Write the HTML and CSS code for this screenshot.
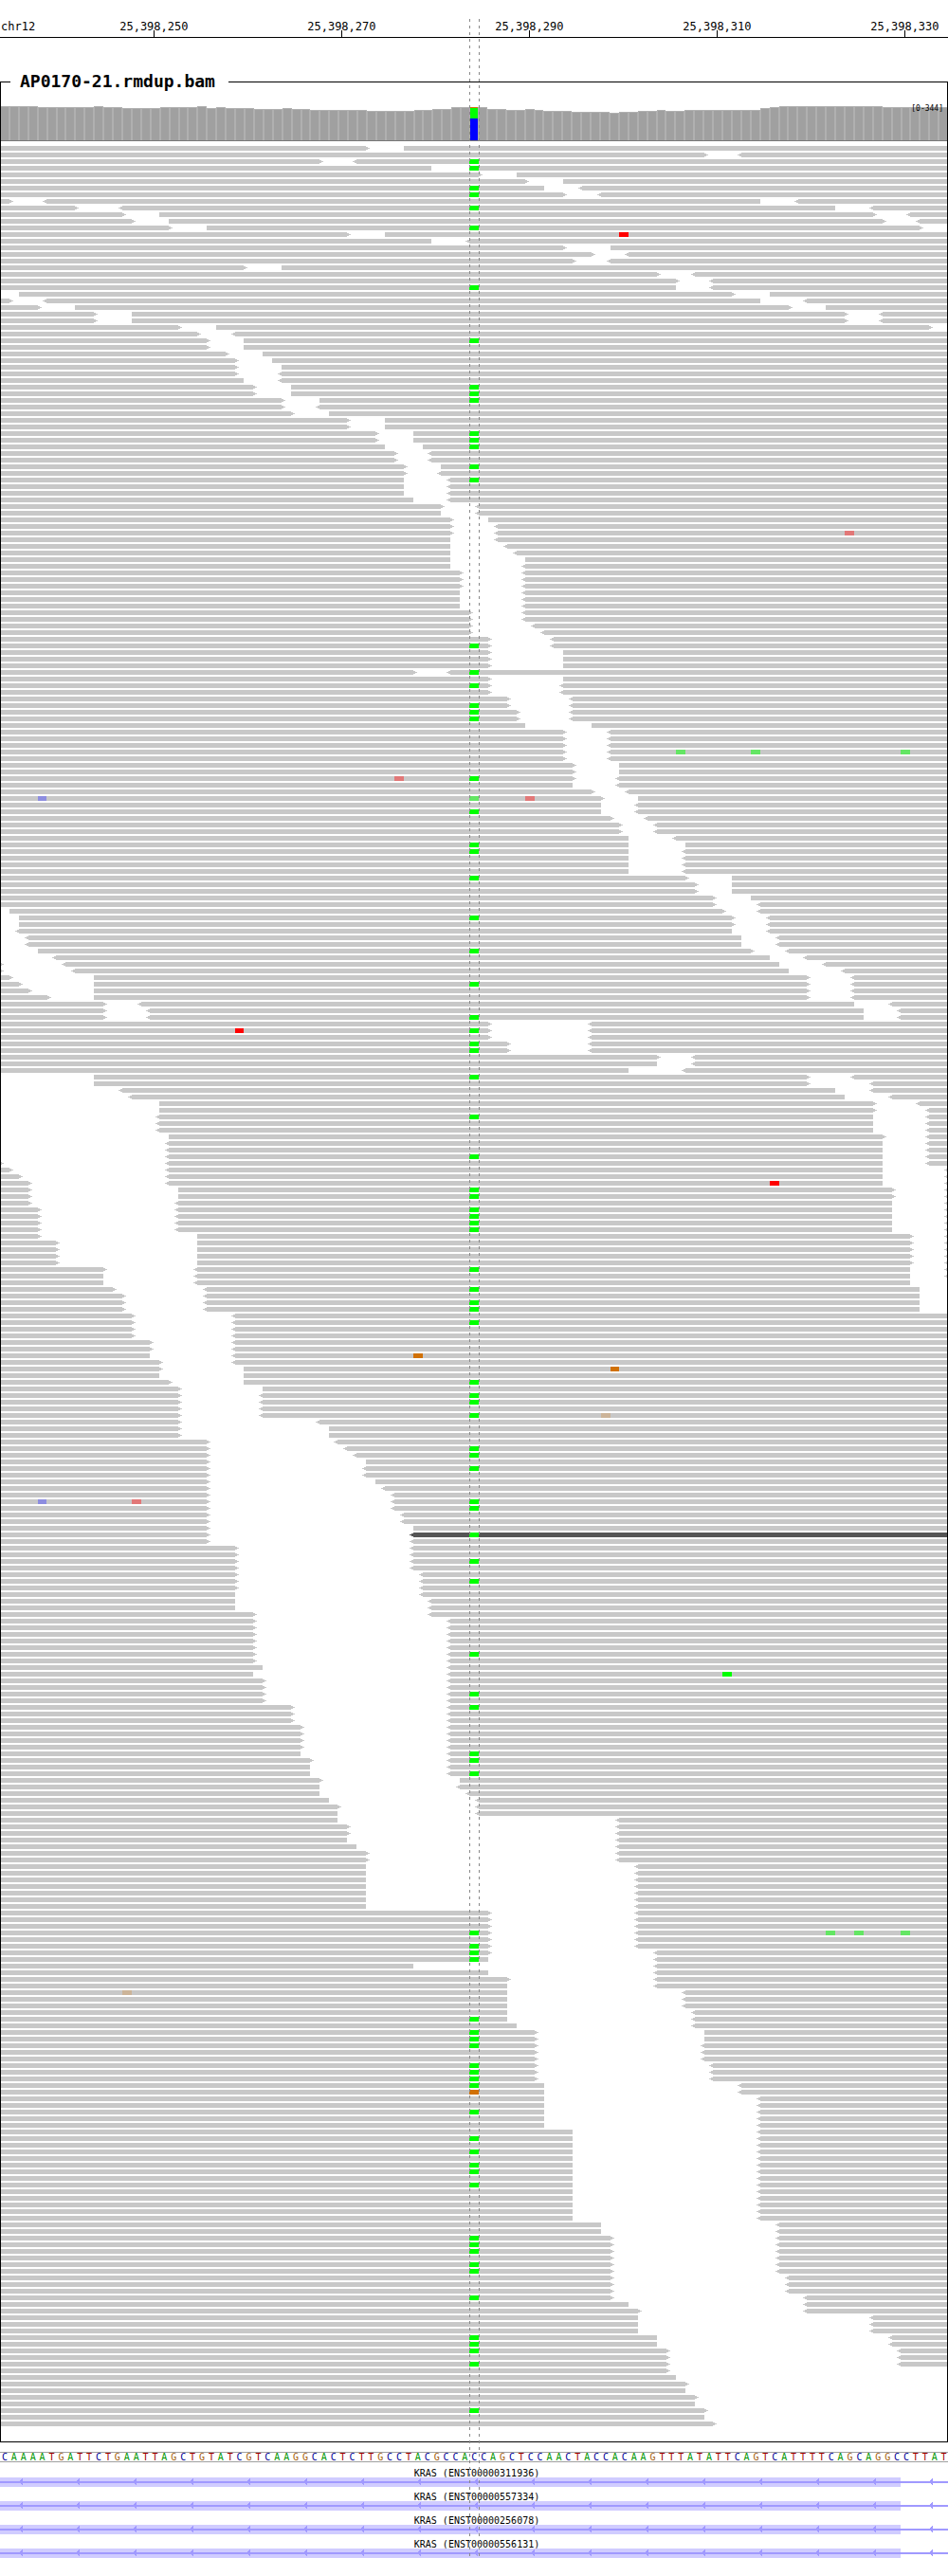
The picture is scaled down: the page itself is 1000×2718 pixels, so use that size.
FILE: index.html
```html
<!DOCTYPE html>
<html lang="en">
<head>
<meta charset="utf-8">
<meta name="viewport" content="width=device-width, initial-scale=1">
<title>AP0170-21.rmdup.bam – chr12:25,398,234-25,398,334</title>
<link rel="stylesheet" href="styles.css">
</head>
<body>
<main class="browser">
  <header class="axis">
    <span class="axis-chrom">chr12</span>
    <div class="axis-labels">
      <span class="axis-label">25,398,250</span>
      <span class="axis-label">25,398,270</span>
      <span class="axis-label">25,398,290</span>
      <span class="axis-label">25,398,310</span>
      <span class="axis-label">25,398,330</span>
    </div>
  </header>

  <section class="panel" aria-labelledby="sample">
    <div class="panel-head">
      <h1 class="panel-title" id="sample">AP0170-21.rmdup.bam</h1>
    </div>
    <div class="panel-body">
      <div class="coverage" id="coverage"></div>
      <span class="coverage-range">[0-344]</span>
      <div class="reads" id="reads"></div>
    </div>
  </section>

  <div class="sequence" id="sequence"></div>

  <section class="genes">
    <div class="gene"><h2 class="gene-name">KRAS (ENST00000311936)</h2><div class="gene-model"><div class="gene-exon"></div></div></div>
    <div class="gene"><h2 class="gene-name">KRAS (ENST00000557334)</h2><div class="gene-model"><div class="gene-exon"></div></div></div>
    <div class="gene"><h2 class="gene-name">KRAS (ENST00000256078)</h2><div class="gene-model"><div class="gene-exon"></div></div></div>
    <div class="gene"><h2 class="gene-name">KRAS (ENST00000556131)</h2><div class="gene-model"><div class="gene-exon"></div></div></div>
  </section>

  <div class="guides"></div>
</main>
<script src="tracks.js"></script>
</body>
</html>
```
FILE: styles.css
```css
:root {
  --read: #c8c8c8;
  --gene: #a099ff;
  --exon: #d0ccff;
  --base: calc(100% / 101);
}

* {
  box-sizing: border-box;
}

body {
  margin: 0;
  background: #fff;
  color: #000;
  font-family: "DejaVu Sans Mono", "Liberation Mono", monospace;
}

.browser {
  position: relative;
  padding-bottom: 19px;
}

h1,
h2 {
  margin: 0;
}

/* Coordinate axis */
.axis {
  position: relative;
  padding-top: 21px;
  border-bottom: 1px solid #000;
  font-size: 12px;
  line-height: 14px;
}

.axis-chrom {
  position: absolute;
  left: 1px;
}

.axis-labels {
  display: flex;
  height: 18px;
  padding-left: calc(var(--base) * 6.5);
  margin-right: calc(var(--base) * -5.5);
}

.axis {
  overflow: hidden;
}

.axis-label {
  flex: 1;
  text-align: center;
  padding-right: 2px;
  background: linear-gradient(#000, #000) no-repeat calc(50% - 1px) 100% / 1px 7px;
}

/* Alignment panel */
.panel {
  margin-top: 35px;
}

.panel-head {
  display: flex;
  height: 24px;
}

.panel-head::before,
.panel-head::after {
  content: "";
  height: 12px;
  align-self: flex-end;
  border-top: 1px solid #000;
}

.panel-head::before {
  width: 10px;
  border-left: 1px solid #000;
}

.panel-head::after {
  flex: 1;
  border-right: 1px solid #000;
}

.panel-title {
  padding: 0 14px 0 10px;
  font-size: 18px;
  line-height: 21px;
}

.panel-body {
  position: relative;
  padding-bottom: 17px;
}

.panel-body::after {
  content: "";
  position: absolute;
  inset: 0;
  border: solid #000;
  border-width: 0 1px 1px;
  pointer-events: none;
}

.coverage {
  display: flex;
  align-items: flex-end;
  height: 50px;
  border-bottom: 1px solid #777;
}

.bar {
  flex: 1;
  border: 1px solid #b0b0b0;
  border-bottom: 0;
  background: #a0a0a0;
}

.bar-split {
  flex: 1;
  display: flex;
  flex-direction: column;
}

.coverage-range {
  position: absolute;
  top: 11px;
  right: 5px;
  font-size: 8px;
  line-height: 10px;
}

.reads {
  display: grid;
  gap: 2px;
  padding-top: 5px;
}

.row {
  position: relative;
  display: flex;
  height: 5px;
}

.read {
  --fill: var(--read);
  position: relative;
  flex: none;
  background: var(--fill);
}

.read-odd {
  --fill: #555;
}

.fwd::after,
.rev::before {
  content: "";
  position: absolute;
  top: 0;
  width: 4px;
  height: 5px;
  background-image: linear-gradient(var(--fill), var(--fill)), linear-gradient(var(--fill), var(--fill));
  background-size: 2px 3px, 4px 1px;
  background-repeat: no-repeat;
}

.fwd::after {
  left: 100%;
  background-position: 0 50%;
}

.rev::before {
  right: 100%;
  background-position: 100% 50%;
}

.snv {
  position: absolute;
  top: 0;
  width: var(--base);
  height: 5px;
}

.fill-A { background: #00ff00; }
.fill-C { background: #0000ff; }
.fill-G { background: #d17105; }
.fill-T { background: #ff0000; }
.fill-a { background: #64e664; }
.fill-c { background: #8d8de0; }
.fill-g { background: #ccb499; }
.fill-t { background: #e27878; }

/* Reference sequence */
.sequence {
  display: flex;
  height: 11px;
  margin-top: 10px;
  border: solid #a0a0a0;
  border-width: 1px 0;
  font-size: 10px;
  line-height: 10px;
}

.nt {
  flex: 1;
  min-width: 0;
  text-align: center;
}

.nt-A { color: #009600; }
.nt-C { color: #000096; }
.nt-G { color: #a5600d; }
.nt-T { color: #a00000; }

/* Transcripts */
.genes {
  padding-top: 1px;
}

.gene {
  padding-top: 7px;
}

.gene-name {
  font-size: 10px;
  font-weight: normal;
  line-height: 8px;
  text-align: center;
  padding-left: 6px;
}

.gene-model {
  position: relative;
  height: 10px;
}

.gene-exon {
  width: 95%;
  height: 10px;
  background: var(--exon);
}

.gene-model::after {
  content: "";
  position: absolute;
  inset: 0;
  background-image:
    linear-gradient(var(--gene), var(--gene)),
    linear-gradient(to right, transparent 23px, var(--gene) 23px, var(--gene) 24px, transparent 24px),
    linear-gradient(to right, transparent 22px, var(--gene) 22px, var(--gene) 23px, transparent 23px),
    linear-gradient(to right, transparent 21px, var(--gene) 21px, var(--gene) 22px, transparent 22px);
  background-size: 100% 2px, 60px 7px, 60px 5px, 60px 3px;
  background-position: 0 4px, 0 1px, 0 2px, 0 3px;
  background-repeat: repeat-x;
}

/* Dashed guides on both sides of the centre base */
.guides {
  position: absolute;
  top: 20px;
  bottom: 20px;
  left: calc(var(--base) * 50);
  width: calc(var(--base) + 1px);
  background-image:
    repeating-linear-gradient(#888 0 3px, transparent 3px 7px),
    repeating-linear-gradient(#888 0 3px, transparent 3px 7px);
  background-size: 1px 100%;
  background-position: 0 0, 100% 0;
  background-repeat: no-repeat;
  pointer-events: none;
}
```
FILE: tracks.js
```js
const BASES = 101;

const SEQUENCE =
  "CAAAATGATTCTGAATTAGCTGTATCGTCAAGGCACTCTTGCCTACGCCAC" +
  "CAGCTCCAACTACCACAAGTTTATATTCAGTCATTTTCAGCAGGCCTTAT";

// [number of bases, bar height]; the centre base is split by allele
const DEPTH = [
  [4, 36], [6, 35], [1, 36], [2, 35], [4, 34], [4, 35], [1, 36], [1, 34], [1, 35],
  [3, 34], [3, 33], [1, 34], [2, 33], [6, 32], [5, 31], [2, 32], [2, 33], [2, 35],
  [1, { G: 1, A: 11, C: 23 }],
  [1, 35], [2, 33], [2, 32], [1, 33], [1, 32], [3, 31], [4, 30], [1, 29], [2, 30],
  [2, 31], [1, 32], [2, 31], [8, 32], [1, 34], [1, 35], [11, 36], [7, 35]
];

// One line per row. A row starts covered; each position toggles coverage.
// "39>" forward read ends, "<43" reverse read starts, a bare number is a plain
// edge, "#" marks a discordant read, "A50" is a mismatch (lower case: low
// quality), "*n" repeats the row.
const ROWS = `
39> 43
75> <79
34> <38 A50
46 50 A50
51> 55
56> 60
58 <62 A50
60> <64 A50
1> <5 81 <85
8> <13 89 <93 A50
13> 17 93> <97
14> 18 94> <98
18> 22 98> A50
37> 41 T66
46 <50
60> 65
63> <67
61> <65
26> 30
70> <74
72> <76
72 <76 A50
0 2 78> 82
1> <5 81 <86
4> 8 84> 88
10> 14 90> <94 *2
19> 23 99>
21> <25
22> 26 A50
22> 26
24> 28
25> 29
25> 30
25> <30
26 <30
27> 31 A50 *2
30> 34 A50
30> <34
31> 35
37> 41 *2
40> 44 A50 *2
41 45 A50
42> <46 *2
43> 47 A50
43> <47
43 <48 A50
43 <48 *2
44 <48
47> <51
47 <51
48> 52
48> <53
48> <53 t90
48 <53
48 <54
48 <55
48 56
48 <56
49> <56 *3
49 <56 *3
50> <56 *2
50> <57
50> <58
52> <59
52> <59 A50
52> 60 *3
44> <48 A50
52> 60
52> <60 A50
52> <60
54> <61
54> <61 A50
55> <61 A50 *2
56 63
60> <65 *3
60> <65 a72 a80 a96
60> <65
61> 66 *2
61> <66 t42 A50
61 <66
63> <67
64> 68 c4 a50 t56
64 <68
64 <68 A50
65> <69
66> <70 *2
67 <72
67 73 A50
67 <73 A50
67 <73 *3
73> 78 A50
74> 78 *2
76> 80
76> <81
0 1 77> <81
0 2 78> <82 A50
0 2 78> <82
0 <2 78 <82
0 <3 79 <83 *2
0 4 80> <84 A50
0 <6 82 <86
0> <7 83 <88
0> <8 84 <90
1> 10 86> <91
2> 10 86> <91 A50
3> 10 86> <91
5> 10 86> <91
11> <15 91 <95
11> <16 92 <96
11> <16 92 <96 A50
52> <63
52> <63 T25 A50
52> <63
54> <63 A50 *2
70> <74
70 <74
67 <73
0 10 86> <91 A50
0 10 86> <93
0 <13 89 <93
0 <14 90 <95
0 17 93> <98
0 17 93> <99
0 <17 93 <99 A50
0 <17 93 <99 *2
0 18 94> <99
0 <18 94 <99 *2
0 <18 94 <99 A50
0> <18 94 <99
1> <18 94 <101
2> <18 94 <101
3> <18 94 <101 T82
3> 19 95> <101 A50 *2
3> <19 95 <101
4> <19 95 <101 A50 *4
4> 21 97> <101
6> 21 97> <101 *4
11> <21 97 <101 A50
11 <21 97 <101
11 <21 97
12> <22 98 A50
13> <22 98
13> <22 98 A50 *2
14> <25
14> <25 A50
14> <25 *2
16> <25 *2
16 <25 G44
17> <25
17> 26 G65
17 26
18> 26 A50
19> 28
19> <28 A50 *2
19> <28
19> <28 A50 g64
19> <34
19> 35 *2
22> <36
22> <37 A50
22> <38 A50
22> 39
22> <39 A50
22> <39
22> 40
22> <41
22> <42
22> <42 c4 t14 A50
22> <42 A50
22> <43 *2
22> 44
22> #<44 A50
22> <44
25> <44 *2
25> <44 A50
25> <44
25> <45
25> <45 A50
25> <45
25 <45
25 <46 *2
27> <46
27> <48 *5
27> <48 A50
27> <48
28 <48
27 <48 A77
28> <48 *2
28> <48 A50
28> <48
31> <48 A50
31> <48 *2
32> <48 *4
32 <48 A50
33> <48 A50
33 <48
33 <48 A50
34> 49
34 <49
34 <50
35 <51
36> <51
36 <51
36 <66
37> <66 *2
37 <66
38 <66
39> <66 *2
39 <68 *7
52> <68 *3
52> <68 A50 a88 a91 a96
52> <68
52> <68 A50
52> <70 A50
52 <70 A50
44 <70
52 <70
54> <70
54 <70
54 <73 g13
54 <73 *2
54 <74
54 <74 A50
55 <74
57> 75 A50 *2
57> <75 A50
57> <75 *2
57> <76 A50 *3
58 <79 A50
58 <79 G50
58 <81 *2
58 <81 A50
58 <81 *2
61 <81
61 <81 A50
61 <81
61 <81 A50
61 <81
61 <81 A50 *2
61 <81
61 <81 A50
61 <81 *5
64 <83 *2
65> <83 A50 *3
65> <83
65> <83 A50 *2
65> <84 *3
65> <86 A50
67 <86
68> <86
68 <93 *3
70 <95 A50 *2
71> <96 A50
71> <96
71> <96 A50
71>
72
73>
73
74>
74
75> A50
75
76>
`;

const pct = (bases) => (bases / BASES) * 100 + "%";

function add(parent, className) {
  const el = document.createElement("div");
  el.className = className;
  parent.append(el);
  return el;
}

function drawCoverage(track) {
  for (const [count, depth] of DEPTH) {
    for (let i = 0; i < count; i++) {
      if (typeof depth === "number") {
        add(track, "bar").style.height = depth + "px";
        continue;
      }
      const split = add(track, "bar-split");
      for (const [allele, height] of Object.entries(depth)) {
        add(split, "fill-" + allele).style.height = height + "px";
      }
    }
  }
}

function drawRow(track, tokens) {
  const row = add(track, "row");
  const marks = tokens.filter((t) => /^[A-Z]/i.test(t));
  const edges = tokens.filter((t) => /^[#<\d]/.test(t));
  if (edges.length % 2 === 0) edges.push(String(BASES));
  let drawnTo = 0;
  for (let i = -1; i < edges.length; i += 2) {
    const open = i < 0 ? "0" : edges[i];
    const close = edges[i + 1] || String(BASES);
    const from = Number(open.replace(/\D/g, ""));
    const to = Number(close.replace(/\D/g, ""));
    const fwd = close.includes(">");
    const rev = open.includes("<");
    if (from === to && !fwd && !rev) continue;
    const read = add(row, "read" + (fwd ? " fwd" : "") + (rev ? " rev" : "") + (open.includes("#") ? " read-odd" : ""));
    read.style.marginLeft = pct(from - drawnTo);
    read.style.width = pct(to - from);
    drawnTo = to;
  }
  for (const mark of marks) {
    add(row, "snv fill-" + mark[0]).style.left = pct(Number(mark.slice(1)));
  }
}

function drawReads(track) {
  for (const line of ROWS.trim().split("\n")) {
    const [layout, repeat] = line.split(" *");
    for (let i = 0; i < Number(repeat || 1); i++) drawRow(track, layout.split(" "));
  }
}

function drawSequence(track) {
  for (const base of SEQUENCE) {
    add(track, "nt nt-" + base).textContent = base;
  }
}

drawCoverage(document.getElementById("coverage"));
drawReads(document.getElementById("reads"));
drawSequence(document.getElementById("sequence"));
```
